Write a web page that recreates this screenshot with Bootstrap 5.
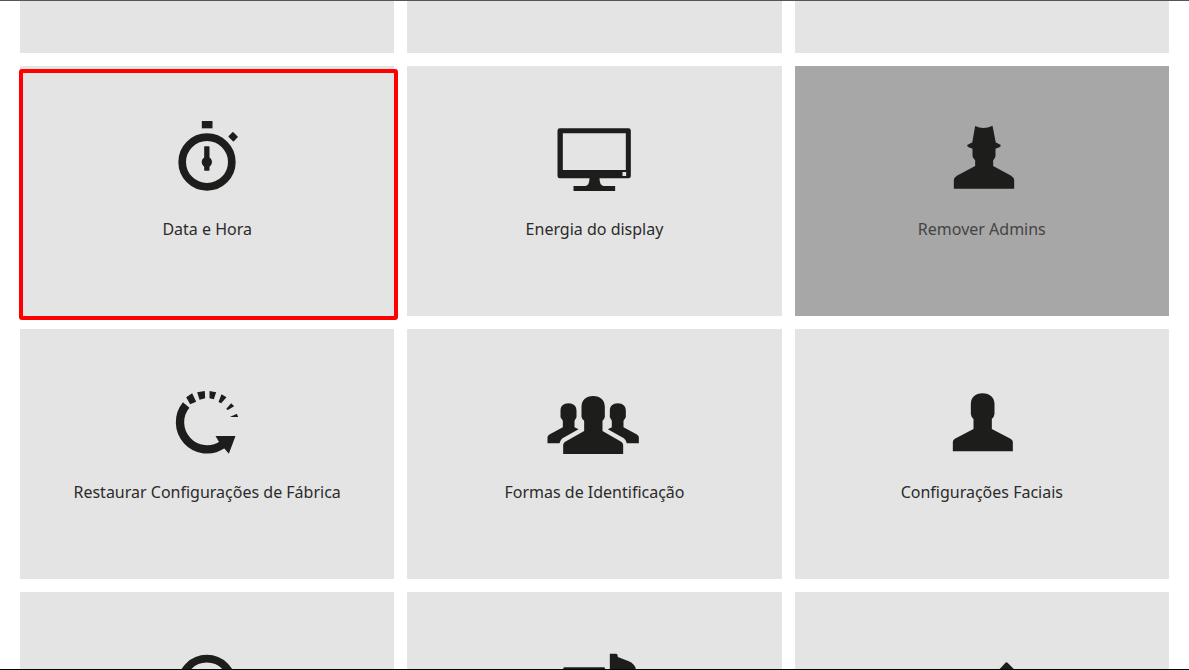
<!DOCTYPE html>
<html lang="pt-BR">
<head>
<meta charset="utf-8">
<meta name="viewport" content="width=device-width, initial-scale=1">
<title>Configurações</title>
<link href="https://cdn.jsdelivr.net/npm/bootstrap@5.3.0/dist/css/bootstrap.min.css" rel="stylesheet">
<style>
  body { font-family: "Noto Sans", "Open Sans", sans-serif; border-top: 1px solid #555; border-bottom: 1px solid #000; }
  .tiles { display: grid; grid-template-columns: repeat(3, 1fr); grid-auto-rows: max-content; gap: 13px; padding: 0 20px; }
  .tile { height: 250px; padding-top: 48px; gap: 15px; background: #e4e4e4; color: #2b2b2b; font-size: 16px; line-height: 24px; border: 0; border-radius: 0; }
  .tile-end { height: 52px; }
  .tile svg { width: 100px; height: 88px; fill: #1d1d1b; flex: none; }
  .tile:disabled { background: #a7a7a7; color: #444; }
  /* red frame around the highlighted option */
  .marked::after { content: ""; position: absolute; inset: 3px -4px -4px -1px; border: 4px solid #f00; border-radius: 3px; }
</style>
</head>
<body class="vh-100 overflow-hidden bg-white">
<main class="tiles h-100 overflow-hidden">
  <div class="tile tile-end"></div>
  <div class="tile tile-end"></div>
  <div class="tile tile-end"></div>

  <button type="button" class="tile marked position-relative d-flex flex-column align-items-center">
    <svg viewBox="22.5 12 300 264" aria-hidden="true">
      <circle cx="172.5" cy="156" r="74.500" fill="none" stroke="#1d1d1b" stroke-width="23"/>
      <rect x="157" y="33" width="32" height="22"/>
      <rect x="240" y="70" width="22" height="20" rx="2" transform="rotate(45 251 80)"/>
      <rect x="164" y="109" width="16" height="73" rx="2"/>
      <circle cx="172" cy="156" r="15.500"/>
    </svg>
    <span>Data e Hora</span>
  </button>
  <button type="button" class="tile d-flex flex-column align-items-center">
    <svg viewBox="88.5 12 300 264" aria-hidden="true">
      <path fill-rule="evenodd" d="M136 55H342Q349 55 349 62V198Q349 205 342 205H255Q255 226 267 228H302V243H177V228H213Q225 226 225 205H136Q129 205 129 198V62Q129 55 136 55ZM145 70V180H334V70ZM324 186V198H335V186Z"/>
    </svg>
    <span>Energia do display</span>
  </button>
  <button type="button" class="tile d-flex flex-column align-items-center" disabled>
    <svg viewBox="79.5 12 300 264" aria-hidden="true">
      <path d="M209 48Q235 60 261 47L271 98Q277 98 278 101L285 104Q287 108 283 111L270 116V138Q269 146 263 151V168L317 197Q326 203 326 210V236H145V210Q145 203 154 197L209 168V151Q202 146 201 138V116L188 111Q183 107 186 104L193 101Q195 98 200 98Z"/>
    </svg>
    <span>Remover Admins</span>
  </button>

  <button type="button" class="tile d-flex flex-column align-items-center">
    <svg viewBox="22.5 -9 300 264" aria-hidden="true">
      <path fill="none" stroke="#1d1d1b" stroke-width="25" d="M110 75A81.500 81.500 0 0 0 219 194"/>
      <path d="M198 168H258L238 221L210 188ZM110 52L128 40L140 65L122 73ZM143 37L166 33L167 55L150 59ZM180 33L200 37L193 58L180 55ZM216 43L231 52L215 70L207 66ZM245 70L254 79L235 90L230 87ZM262 101L266 111H241Z"/>
    </svg>
    <span>Restaurar Configurações de Fábrica</span>
  </button>
  <button type="button" class="tile d-flex flex-column align-items-center">
    <svg viewBox="28.5 -24 300 264" aria-hidden="true">
      <path d="M176 33C198 33 211 46 211 65V95Q210 102 204 107V138L260 170Q266 174 266 180V207H86V180Q86 174 92 170L149 138V107Q142 102 141 95V65C141 46 154 33 176 33Z"/>
      <path d="M102 55C117 55 126 64 126 77V97L120 107V127L132 133L84 160Q77 165 75 175H39V156Q40 151 46 148L85 127V107L78 97V77C78 64 87 55 102 55Z"/>
      <path d="M250 55C235 55 226 64 226 77V97L232 107V127L220 133L268 160Q275 165 277 175H313V156Q312 151 306 148L267 127V107L274 97V77C274 64 265 55 250 55Z"/>
    </svg>
    <span>Formas de Identificação</span>
  </button>
  <button type="button" class="tile d-flex flex-column align-items-center">
    <svg viewBox="4.5 -24 300 264" aria-hidden="true">
      <path d="M156 25C178 25 192 38 192 57V87Q191 96 184 102V132L240 161Q247 165 247 171V199H67V171Q67 165 73 161L129 132V102Q122 96 121 87V57C121 38 134 25 156 25Z"/>
    </svg>
    <span>Configurações Faciais</span>
  </button>

  <button type="button" class="tile d-flex flex-column align-items-center" aria-label="Relógio">
    <svg viewBox="-7.5 0 300 264" aria-hidden="true">
      <circle cx="142" cy="133" r="77" fill="none" stroke="#1d1d1b" stroke-width="23"/>
    </svg>
  </button>
  <button type="button" class="tile d-flex flex-column align-items-center" aria-label="Sinal">
    <svg viewBox="13.5 0 300 264" aria-hidden="true">
      <path d="M75 82H193Q197 82 197 87V200H71V87Q71 82 75 82ZM211 41H231Q235 42 235 51L268 64Q289 74 289 90V110H211Z"/>
    </svg>
  </button>
  <button type="button" class="tile d-flex flex-column align-items-center" aria-label="Editar">
    <svg viewBox="-85.5 0 300 264" aria-hidden="true">
      <path d="M124 80L134 69Q138 65 142 69L170 97L90 180L60 145Z"/>
    </svg>
  </button>
</main>
<script src="https://cdn.jsdelivr.net/npm/bootstrap@5.3.0/dist/js/bootstrap.bundle.min.js"></script>
</body>
</html>
